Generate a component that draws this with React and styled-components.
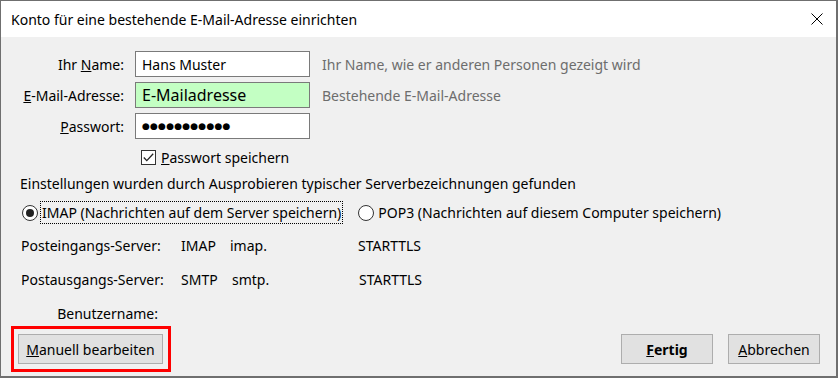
import styled, { createGlobalStyle } from "styled-components";

const Global = createGlobalStyle`
  body {
    margin: 0;
    background: #ffffff;
  }
  * {
    box-sizing: border-box;
  }
`;

const Window = styled.div`
  width: 838px;
  height: 378px;
  border: 1px solid #6f6f6f;
  border-right-width: 2px;
  border-bottom-width: 2px;
  display: flex;
  flex-direction: column;
  font-family: "Noto Sans", "Open Sans", sans-serif;
  font-size: 14px;
  color: #000;
  background: #f0f0f0;
  overflow: hidden;
`;

const TitleBar = styled.div`
  height: 36px;
  background: #fff;
  display: flex;
  align-items: center;
  justify-content: space-between;
  padding: 0 10px 0 10px;
  flex-shrink: 0;
`;

const Title = styled.div`
  font-size: 14px;
  color: #000;
`;

const Close = styled.div`
  width: 24px;
  height: 24px;
  display: flex;
  align-items: center;
  justify-content: center;
  margin-right: -3px;
`;

const Body = styled.div`
  flex: 1;
  display: flex;
  flex-direction: column;
  padding: 14px 16px 4px 10px;
`;

const FormGrid = styled.div`
  display: grid;
  grid-template-columns: 113px 175px auto;
  column-gap: 11px;
  row-gap: 5px;
  align-items: center;
`;

const Label = styled.label`
  text-align: right;
  white-space: nowrap;
`;

const Field = styled.div`
  height: 26px;
  border: 1px solid #7a7a7a;
  background: ${(p) => (p.$valid ? "#c3ffc3" : "#fff")};
  display: flex;
  align-items: center;
  padding: 0 6px;
  font-size: ${(p) => (p.$big ? "16px" : "14px")};
  white-space: nowrap;
`;

const Dots = styled.span`
  font-family: "DejaVu Sans", sans-serif;
  font-size: 9px;
  letter-spacing: 0.2px;
`;

const Hint = styled.span`
  color: #6d6d6d;
  white-space: nowrap;
  padding-left: 1px;
`;

const CheckRow = styled.div`
  display: flex;
  align-items: center;
  gap: 5px;
  margin: 9px 0 0 130px;
`;

const Box = styled.span`
  width: 15px;
  height: 15px;
  border: 1px solid #333;
  background: #fff;
  display: flex;
  align-items: center;
  justify-content: center;
`;

const Info = styled.div`
  margin: 7px 0 0 9px;
`;

const RadioRow = styled.div`
  display: flex;
  align-items: center;
  margin: 8px 0 0 11px;
  gap: 15px;
`;

const RadioOption = styled.div`
  display: flex;
  align-items: center;
  gap: 2px;
`;

const Circle = styled.span`
  width: 16px;
  height: 16px;
  border-radius: 50%;
  border: 1px solid #333;
  background: #fff;
  display: flex;
  align-items: center;
  justify-content: center;

  &::after {
    content: "";
    width: 8px;
    height: 8px;
    border-radius: 50%;
    background: ${(p) => (p.$on ? "#222" : "transparent")};
  }
`;

const RadioText = styled.span`
  padding: 1px 1px;
  border: 1px dotted ${(p) => (p.$focus ? "#000" : "transparent")};
  white-space: nowrap;
`;

const ServerGrid = styled.div`
  display: grid;
  grid-template-columns: 137px 49px 151px auto;
  grid-template-rows: 34px 34px 27px;
  align-items: center;
  margin: 4px 0 0 0;
  padding-left: 10px;
`;

const ServerLabel = styled.span`
  text-align: right;
  white-space: nowrap;
  align-self: ${(p) => (p.$end ? "end" : "center")};
`;

const ServerValue = styled.span`
  white-space: nowrap;
  padding-left: ${(p) => p.$pl || 0}px;
`;

const Footer = styled.div`
  margin-top: auto;
  display: flex;
  align-items: center;
  justify-content: space-between;
`;

const Highlight = styled.div`
  border: 3px solid #ff0000;
  padding: 5px 5px 5px 4px;
`;

const Button = styled.button`
  height: 30px;
  width: ${(p) => p.$w}px;
  background: #e1e1e1;
  border: 1px solid #adadad;
  font-family: inherit;
  font-size: 14px;
  color: #000;
  font-weight: ${(p) => (p.$primary ? 700 : 400)};
  padding: 0;
`;

const Buttons = styled.div`
  display: flex;
  gap: 15px;
`;

export default function App() {
  return (
    <>
      <Global />
      <Window>
        <TitleBar>
          <Title>Konto für eine bestehende E-Mail-Adresse einrichten</Title>
          <Close>
            <svg width="12" height="12" viewBox="0 0 12 12">
              <path d="M0.5 0.5 L11.5 11.5 M11.5 0.5 L0.5 11.5" stroke="#000" strokeWidth="1" />
            </svg>
          </Close>
        </TitleBar>
        <Body>
          <FormGrid>
            <Label>
              Ihr <u>N</u>ame:
            </Label>
            <Field>Hans Muster</Field>
            <Hint>Ihr Name, wie er anderen Personen gezeigt wird</Hint>
            <Label>
              <u>E</u>-Mail-Adresse:
            </Label>
            <Field $valid $big>
              E-Mailadresse
            </Field>
            <Hint>Bestehende E-Mail-Adresse</Hint>
            <Label>
              <u>P</u>asswort:
            </Label>
            <Field>
              <Dots>●●●●●●●●●●●</Dots>
            </Field>
            <span />
          </FormGrid>
          <CheckRow>
            <Box>
              <svg width="11" height="9" viewBox="0 0 11 9">
                <path d="M0.8 4.5 L3.8 7.6 L10.2 0.8" fill="none" stroke="#222" strokeWidth="1.3" />
              </svg>
            </Box>
            <span>
              <u>P</u>asswort speichern
            </span>
          </CheckRow>
          <Info>Einstellungen wurden durch Ausprobieren typischer Serverbezeichnungen gefunden</Info>
          <RadioRow>
            <RadioOption>
              <Circle $on />
              <RadioText $focus>IMAP (Nachrichten auf dem Server speichern)</RadioText>
            </RadioOption>
            <RadioOption>
              <Circle />
              <RadioText>POP3 (Nachrichten auf diesem Computer speichern)</RadioText>
            </RadioOption>
          </RadioRow>
          <ServerGrid>
            <ServerLabel>Posteingangs-Server:</ServerLabel>
            <ServerValue $pl={23}>IMAP</ServerValue>
            <ServerValue $pl={23}>imap.</ServerValue>
            <ServerValue>STARTTLS</ServerValue>
            <ServerLabel>Postausgangs-Server:</ServerLabel>
            <ServerValue $pl={23}>SMTP</ServerValue>
            <ServerValue $pl={25}>smtp.</ServerValue>
            <ServerValue $pl={1}>STARTTLS</ServerValue>
            <ServerLabel $end>Benutzername:</ServerLabel>
          </ServerGrid>
          <Footer>
            <Highlight>
              <Button $w={145}>
                <u>M</u>anuell bearbeiten
              </Button>
            </Highlight>
            <Buttons>
              <Button $w={92} $primary>
                <u>F</u>ertig
              </Button>
              <Button $w={92}>
                <u>A</u>bbrechen
              </Button>
            </Buttons>
          </Footer>
        </Body>
      </Window>
    </>
  );
}
